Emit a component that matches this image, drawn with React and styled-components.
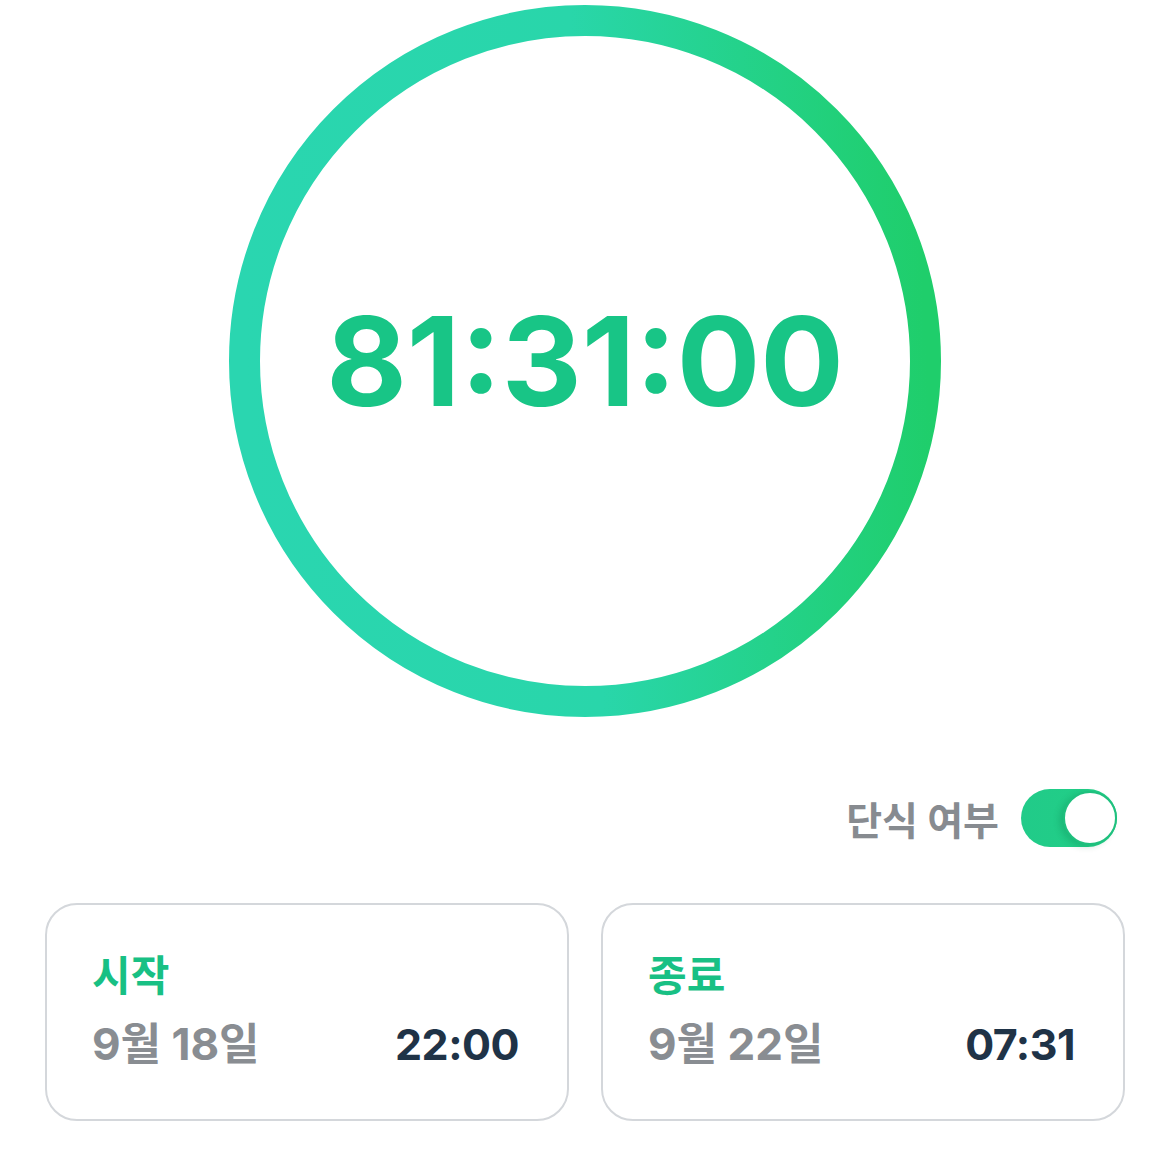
import React, { useState } from 'react';
import styled, { createGlobalStyle } from 'styled-components';

const GlobalStyle = createGlobalStyle`
    body {
        margin: 0;
        background: #ffffff;
        font-family: "Inter", "Noto Sans CJK KR", sans-serif;
    }
`;

const Page = styled.div`
    width: 1170px;
    padding: 5px 45px 0;
    box-sizing: border-box;
    display: flex;
    flex-direction: column;
`;

const Dial = styled.div`
    display: grid;
    place-items: center;
    width: 712px;
    height: 712px;
    align-self: center;

    & > * {
        grid-area: 1 / 1;
    }
`;

const Timer = styled.div`
    font-size: 124px;
    font-weight: 700;
    color: #18c586;
    letter-spacing: 0;
    line-height: 1;
`;

const ToggleRow = styled.div`
    display: flex;
    align-items: center;
    justify-content: flex-end;
    gap: 22px;
    margin-top: 72px;
    padding-right: 8px;
`;

const ToggleLabel = styled.span`
    font-size: 39px;
    font-weight: 700;
    color: #878b90;
`;

const Switch = styled.button`
    width: 96px;
    height: 58px;
    border: none;
    border-radius: 29px;
    padding: 0;
    background: linear-gradient(90deg, #21cb89, #22cf86);
    display: flex;
    align-items: center;
    justify-content: ${p => (p.$on ? 'flex-end' : 'flex-start')};
    cursor: pointer;
`;

const Knob = styled.span`
    width: 50px;
    height: 50px;
    border-radius: 50%;
    background: #ffffff;
    border: 2px solid #1fc07e;
    box-shadow: -4px 2px 6px rgba(0, 90, 50, 0.18);
`;

const Cards = styled.div`
    display: grid;
    grid-template-columns: 1fr 1fr;
    gap: 32px;
    margin-top: 56px;
`;

const Card = styled.div`
    height: 218px;
    box-sizing: border-box;
    border: 2px solid #d4d7db;
    border-radius: 32px;
    padding: 45px 48px 0 45px;
    display: flex;
    flex-direction: column;
    gap: 13px;
`;

const CardTitle = styled.div`
    font-size: 42px;
    font-weight: 700;
    color: #18c084;
    line-height: 52px;
`;

const CardRow = styled.div`
    display: flex;
    justify-content: space-between;
    align-items: baseline;
    line-height: 58px;
`;

const DateText = styled.span`
    font-size: 44px;
    font-weight: 700;
    color: #898d92;
`;

const TimeText = styled.span`
    font-size: 43px;
    font-weight: 700;
    color: #1f3347;
    letter-spacing: -0.5px;
`;

const Ring = () => (
    <svg width="712" height="712" viewBox="0 0 712 712">
        <defs>
            <linearGradient id="ring" x1="0" y1="0.5" x2="1" y2="0.45">
                <stop offset="0" stopColor="#2ad6b0" />
                <stop offset="0.5" stopColor="#29d6aa" />
                <stop offset="1" stopColor="#1fce6b" />
            </linearGradient>
        </defs>
        <circle cx="356" cy="356" r="340.5" fill="none" stroke="url(#ring)" strokeWidth="31" />
    </svg>
);

const entries = [
    { title: '시작', date: '9월 18일', time: '22:00' },
    { title: '종료', date: '9월 22일', time: '07:31' },
];

const App = () => {
    const [fasting, setFasting] = useState(true);

    return (
        <Page>
            <GlobalStyle />
            <Dial>
                <Ring />
                <Timer>81:31:00</Timer>
            </Dial>
            <ToggleRow>
                <ToggleLabel>단식 여부</ToggleLabel>
                <Switch $on={fasting} onClick={() => setFasting(!fasting)}>
                    <Knob />
                </Switch>
            </ToggleRow>
            <Cards>
                {entries.map(e => (
                    <Card key={e.title}>
                        <CardTitle>{e.title}</CardTitle>
                        <CardRow>
                            <DateText>{e.date}</DateText>
                            <TimeText>{e.time}</TimeText>
                        </CardRow>
                    </Card>
                ))}
            </Cards>
        </Page>
    );
};

export default App;
